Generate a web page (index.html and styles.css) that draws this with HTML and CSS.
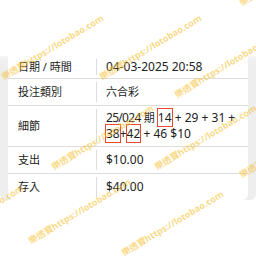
FILE: index.html
```html
<!DOCTYPE html>
<html lang="zh-Hant">
<head>
<meta charset="utf-8">
<link rel="stylesheet" href="styles.css">
</head>
<body>
<div class="page">
  <div class="spacer"></div>
  <div class="panel">
    <div class="card">
      <div class="row r1">
        <div class="k">日期 / 時間</div>
        <div class="v">04-03-2025 20:58</div>
      </div>
      <div class="row">
        <div class="k">投注類別</div>
        <div class="v"><span class="cjk">六合彩</span></div>
      </div>
      <div class="row r3">
        <div class="k">細節</div>
        <div class="v multi"><span class="tight">25/024</span> <span class="cjk">期</span> <span class="hit">14</span> + 29 + 31 +<br><span class="hit">38</span>+<span class="hit">42</span> + 46 $10</div>
      </div>
      <div class="row">
        <div class="k">支出</div>
        <div class="v">$10.00</div>
      </div>
      <div class="row last">
        <div class="k">存入</div>
        <div class="v">$40.00</div>
      </div>
    </div>
  </div>
  <div class="wm">
    <span class="w" style="left:5px;top:72px">樂透寶https://lotobao.com</span>
    <span class="w" style="left:103px;top:72px">樂透寶https://lotobao.com</span>
    <span class="w" style="left:178px;top:90px">樂透寶https://lotobao.com</span>
    <span class="w" style="left:243px;top:-2px">樂透寶https://lotobao.com</span>
    <span class="w" style="left:55px;top:162px">樂透寶https://lotobao.com</span>
    <span class="w" style="left:158px;top:162px">樂透寶https://lotobao.com</span>
    <span class="w" style="left:243px;top:170px">樂透寶https://lotobao.com</span>
    <span class="w" style="left:32px;top:236px">樂透寶https://lotobao.com</span>
    <span class="w" style="left:125px;top:248px">樂透寶https://lotobao.com</span>
    <span class="w" style="left:-75px;top:242px">樂透寶https://lotobao.com</span>
  </div>
</div>
</body>
</html>
```

FILE: styles.css
```css
html, body {
  margin: 0;
  padding: 0;
  background: #ffffff;
}
body {
  width: 256px;
  height: 256px;
  overflow: hidden;
  font-family: "Noto Sans", "Noto Sans CJK TC", sans-serif;
  color: #222222;
}
.page {
  position: relative;
  width: 256px;
  height: 256px;
  overflow: hidden;
}
.spacer {
  height: 56px;
}
.panel {
  background: linear-gradient(#f6f6f6, #eeeeee 6px);
  padding: 0 8px;
  border-bottom-left-radius: 6px;
  border-bottom-right-radius: 6px;
}
.card {
  background: #ffffff;
  border-bottom-left-radius: 6px;
  border-bottom-right-radius: 6px;
}
.row {
  display: grid;
  grid-template-columns: 88px 1fr;
  border-bottom: 1px solid #dddddd;
  padding: 3px 0;
}
.row.last {
  border-bottom: none;
}
.k {
  padding-left: 10px;
  font-size: 11px;
  line-height: 20px;
  display: flex;
  align-items: center;
}
.v {
  border-left: 1px solid #dddddd;
  padding-left: 9px;
  font-size: 12px;
  line-height: 20px;
  display: flex;
  align-items: center;
}
.r1 .k, .r1 .v {
  line-height: 16px;
}
.v.multi {
  display: block;
  line-height: 16px;
  padding-top: 1px;
  padding-bottom: 1px;
}
.tight {
  letter-spacing: -0.7px;
}
.cjk {
  font-size: 11px;
}
.hit {
  outline: 1px solid #ea4a2e;
  outline-offset: 0px;
}
.wm {
  position: absolute;
  left: 0;
  top: 0;
  width: 256px;
  height: 256px;
  pointer-events: none;
}
.w {
  position: absolute;
  font-family: "Noto Sans", "Noto Sans CJK TC", sans-serif;
  font-weight: bold;
  font-size: 9px;
  line-height: 10px;
  white-space: nowrap;
  color: rgba(246, 192, 50, 0.6);
  transform-origin: 0 100%;
  transform: rotate(-31deg);
}
```
